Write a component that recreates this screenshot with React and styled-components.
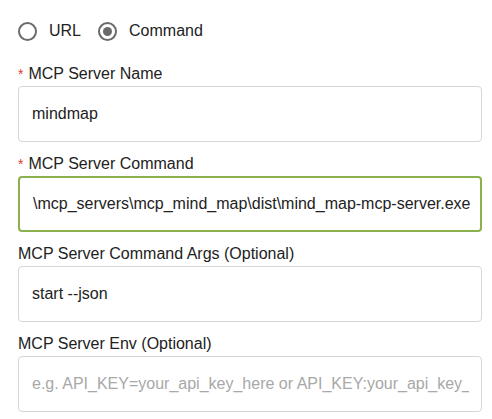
import React from "react";
import styled, { createGlobalStyle } from "styled-components";

const Global = createGlobalStyle`
  html, body { margin: 0; padding: 0; background: #fff; }
  body { font-family: "Liberation Sans", Arial, sans-serif; }
`;

const Form = styled.div`
  width: 464px;
  padding: 21px 0 0 18px;
  display: flex;
  flex-direction: column;
`;

const RadioRow = styled.div`
  display: flex;
  align-items: center;
  gap: 17px;
  height: 20px;
  margin-bottom: 23px;
`;

const RadioLabel = styled.label`
  display: flex;
  align-items: center;
  gap: 12px;
  font-size: 16px;
  color: #222;
  cursor: pointer;
`;

const Circle = styled.span`
  box-sizing: border-box;
  width: 19px;
  height: 19px;
  border-radius: 50%;
  border: 2px solid #6b6b6b;
  display: flex;
  align-items: center;
  justify-content: center;
  &::after {
    content: "";
    width: 9px;
    height: 9px;
    border-radius: 50%;
    background: ${(p) => (p.$checked ? "#6b6b6b" : "transparent")};
  }
`;

const Field = styled.div`
  display: flex;
  flex-direction: column;
  gap: 2px;
  margin-bottom: 12px;
`;

const Label = styled.div`
  font-size: 16px;
  line-height: 20px;
  height: 20px;
  color: #222;
  display: flex;
  align-items: center;
`;

const Star = styled.span`
  color: #e53935;
  font-size: 14px;
  margin-right: 5px;
`;

const Input = styled.input`
  box-sizing: border-box;
  width: 464px;
  height: 56px;
  border-radius: 4px;
  border: ${(p) => (p.$focused ? "2px solid #8ab14e" : "1px solid #d6d6d6")};
  padding: 0 ${(p) => (p.$focused ? "8px" : "12px")} 0 13px;
  font-family: "Liberation Sans", Arial, sans-serif;
  font-size: 16px;
  color: #222;
  outline: none;
  background: #fff;
  &::placeholder { color: #a8a8a8; }
`;

export default function App() {
  return (
    <>
      <Global />
      <Form>
        <RadioRow>
          <RadioLabel><Circle /> URL</RadioLabel>
          <RadioLabel><Circle $checked /> Command</RadioLabel>
        </RadioRow>
        <Field>
          <Label><Star>*</Star>MCP Server Name</Label>
          <Input defaultValue="mindmap" />
        </Field>
        <Field>
          <Label><Star>*</Star>MCP Server Command</Label>
          <Input $focused defaultValue="\mcp_servers\mcp_mind_map\dist\mind_map-mcp-server.exe" />
        </Field>
        <Field>
          <Label>MCP Server Command Args (Optional)</Label>
          <Input defaultValue="start --json" />
        </Field>
        <Field>
          <Label>MCP Server Env (Optional)</Label>
          <Input placeholder="e.g. API_KEY=your_api_key_here or API_KEY:your_api_key_" />
        </Field>
      </Form>
    </>
  );
}
